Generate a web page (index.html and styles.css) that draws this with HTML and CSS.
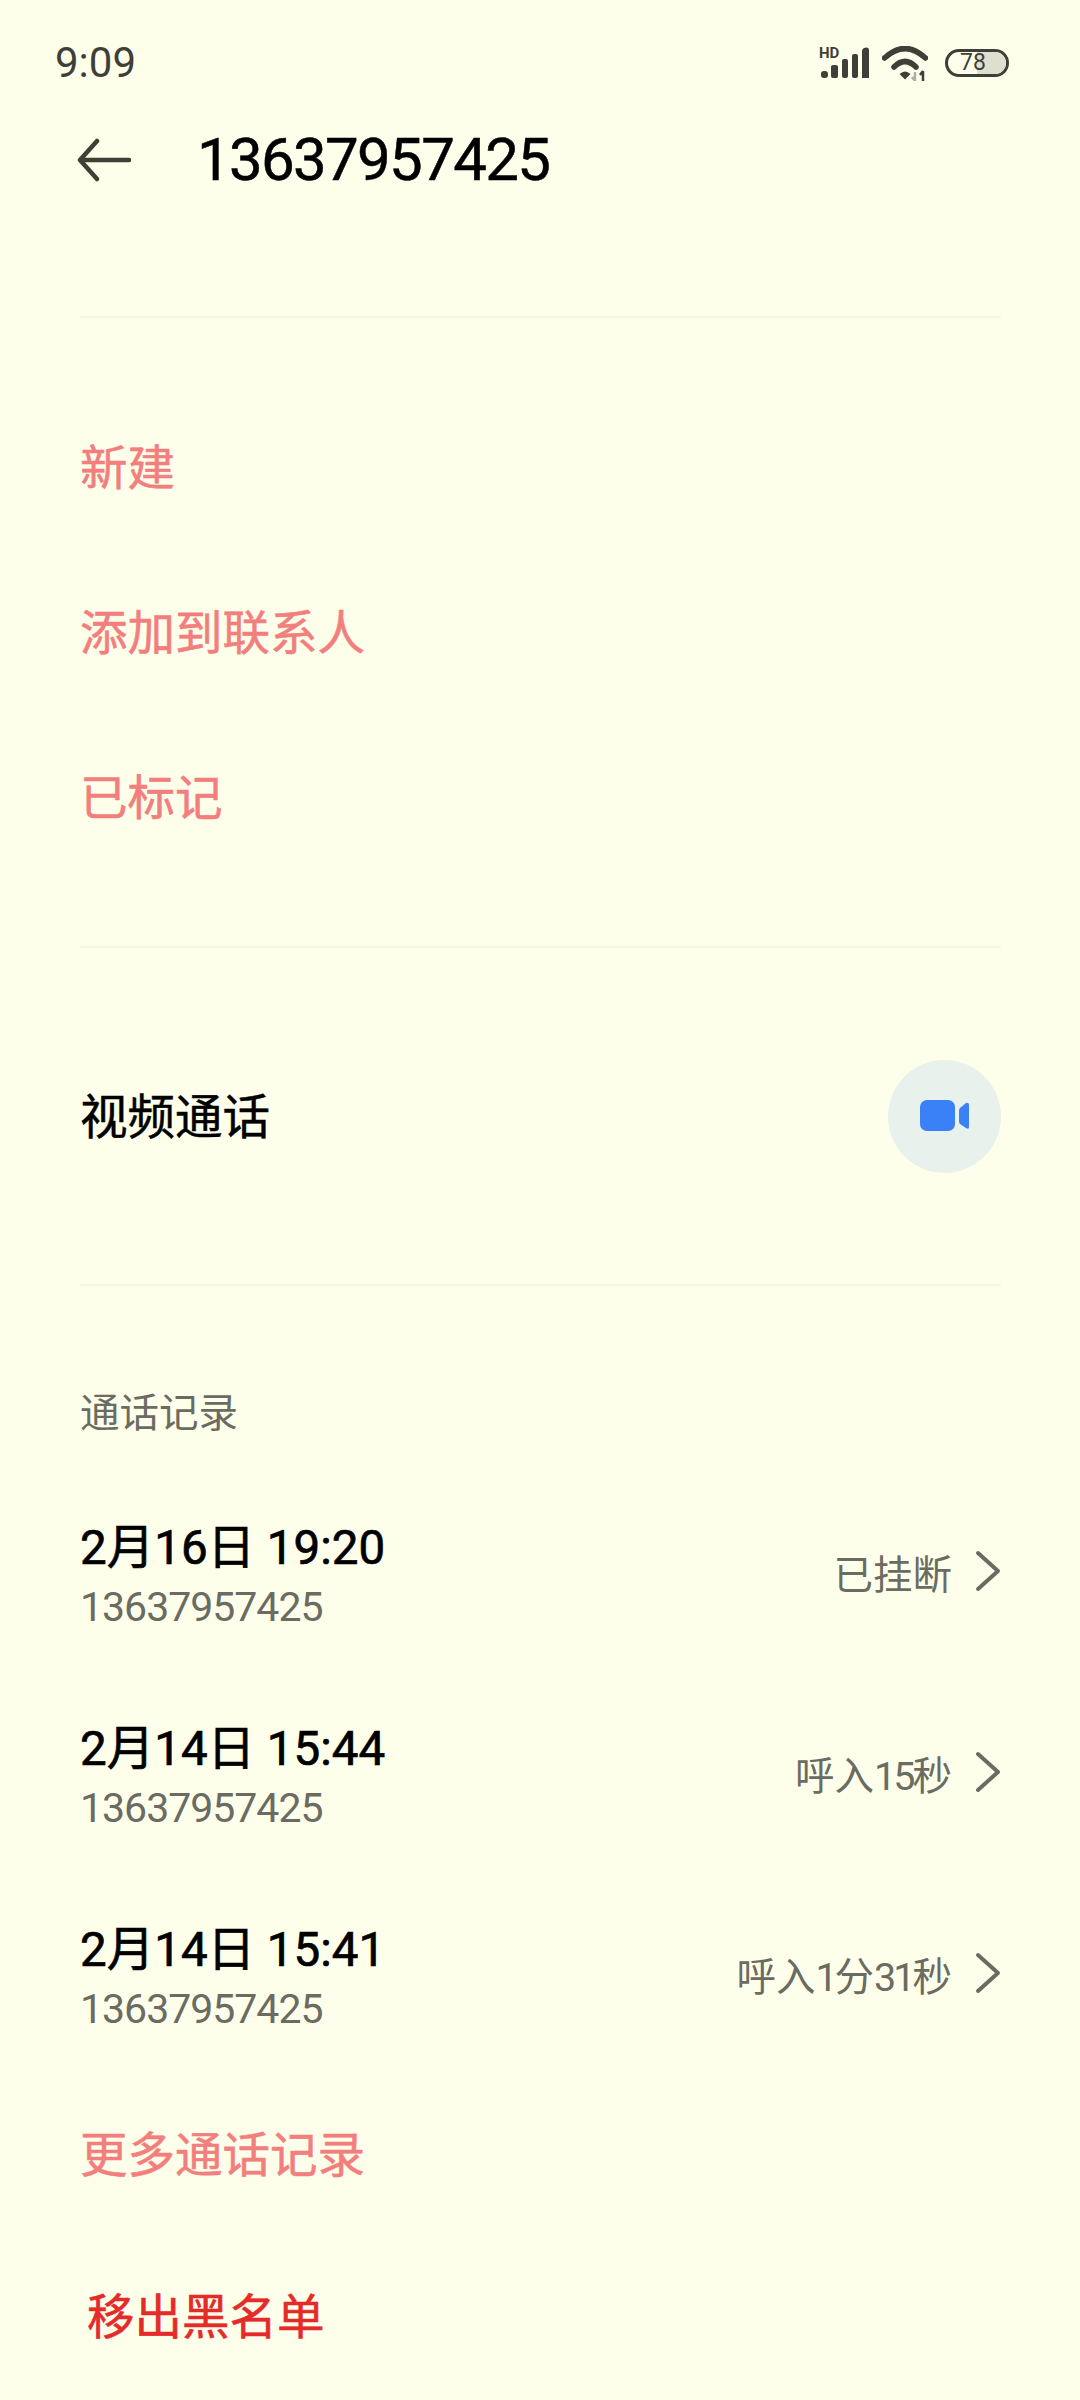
FILE: index.html
```html
<!DOCTYPE html>
<html lang="zh-CN">
<head>
<meta charset="utf-8">
<title>13637957425</title>
<link rel="stylesheet" href="styles.css">
</head>
<body>
<div class="page">
  <div class="status">
    <span class="time">9:09</span>
    <div class="status-icons">
      <svg class="ic-signal" width="50" height="40" viewBox="0 -4 50 40">
        <text x="0" y="11" class="hd">HD</text>
        <rect x="2" y="24" width="7" height="7" rx="3" fill="#3f3f38"/>
        <rect x="12" y="18" width="7" height="13" rx="2" fill="#3f3f38"/>
        <rect x="23" y="12" width="6" height="19" rx="2" fill="#3f3f38"/>
        <rect x="33" y="7" width="6" height="24" rx="2" fill="#3f3f38"/>
        <path d="M43 4 Q43 1 47 0.5 Q50 0 50 3 V31 H43 Z" fill="#3f3f38"/>
      </svg>
      <svg class="ic-wifi" width="46" height="35" viewBox="0 0 46 35">
        <path d="M2.5 12 Q23 -7 43.5 12" fill="none" stroke="#3f3f38" stroke-width="5.5" stroke-linecap="round"/>
        <path d="M12 21 Q23 10 34 21" fill="none" stroke="#3f3f38" stroke-width="5.5" stroke-linecap="round"/>
        <path d="M17.5 28 Q23 23 28.5 28 L23 33.5 Z" fill="#3f3f38"/>
        <path d="M33 35 V26 M30 31 L33 35" fill="none" stroke="#b0b0a6" stroke-width="2.5"/>
        <path d="M41 35 V25 M38 29 L41 25" fill="none" stroke="#3f3f38" stroke-width="2.5"/>
      </svg>
      <div class="battery"><span class="battery-fill"></span><span class="battery-num">78</span></div>
    </div>
  </div>

  <header class="title-bar">
    <svg class="back" width="54" height="44" viewBox="0 0 54 44">
      <path d="M52 22 H4 M20 3 L3 22 L20 41" fill="none" stroke="#3f3f38" stroke-width="4.5" stroke-linecap="round" stroke-linejoin="round"/>
    </svg>
    <h1 class="title">13637957425</h1>
  </header>

  <hr class="divider first">

  <section class="actions">
    <div class="action">新建</div>
    <div class="action">添加到联系人</div>
    <div class="action">已标记</div>
  </section>

  <hr class="divider">

  <section class="video">
    <span class="video-label">视频通话</span>
    <div class="video-btn">
      <svg width="50" height="32" viewBox="0 0 50 32">
        <rect x="0" y="0" width="35" height="31" rx="7" fill="#3a80f6"/>
        <path d="M40 8 L46 3 Q49 2 49 5 V27 Q49 30 46 28 L40 24 Q39 23 39 21 V11 Q39 9 40 8 Z" fill="#3a80f6"/>
      </svg>
    </div>
  </section>

  <hr class="divider">

  <div class="section-label">通话记录</div>

  <section class="records">
    <div class="record">
      <div class="record-main"><div class="record-date">2月16日 19:20</div><div class="record-num">13637957425</div></div>
      <div class="record-side"><span>已挂断</span><svg class="chev" width="26" height="42" viewBox="0 0 26 42"><path d="M3 3 L23 21 L3 39" fill="none" stroke="#6b6b62" stroke-width="4" stroke-linecap="round" stroke-linejoin="round"/></svg></div>
    </div>
    <div class="record">
      <div class="record-main"><div class="record-date">2月14日 15:44</div><div class="record-num">13637957425</div></div>
      <div class="record-side"><span>呼入<span class="digits">15</span>秒</span><svg class="chev" width="26" height="42" viewBox="0 0 26 42"><path d="M3 3 L23 21 L3 39" fill="none" stroke="#6b6b62" stroke-width="4" stroke-linecap="round" stroke-linejoin="round"/></svg></div>
    </div>
    <div class="record">
      <div class="record-main"><div class="record-date">2月14日 15:41</div><div class="record-num">13637957425</div></div>
      <div class="record-side"><span>呼入<span class="digits">1</span>分<span class="digits">31</span>秒</span><svg class="chev" width="26" height="42" viewBox="0 0 26 42"><path d="M3 3 L23 21 L3 39" fill="none" stroke="#6b6b62" stroke-width="4" stroke-linecap="round" stroke-linejoin="round"/></svg></div>
    </div>
  </section>

  <div class="more">更多通话记录</div>
  <div class="unblock">移出黑名单</div>
</div>
</body>
</html>
```
FILE: styles.css
```css
* { box-sizing: border-box; }
html, body { margin: 0; padding: 0; }
body {
  background: #feffeb;
  font-family: "Roboto", "Noto Sans CJK SC", sans-serif;
  color: #000;
}
.page { width: 1080px; height: 2400px; overflow: hidden; }

.status {
  height: 124px;
  padding: 41px 71px 0 55px;
  display: flex;
  justify-content: space-between;
  align-items: flex-start;
}
.time { font-size: 42px; line-height: 44px; color: #3f3f38; }
.status-icons { display: flex; align-items: center; height: 44px; }
.ic-wifi { margin-left: 13px; }
.hd { font: 700 15px "Roboto", sans-serif; fill: #3f3f38; }
.battery {
  position: relative;
  width: 64px; height: 28px;
  border: 3px solid #3f3f38;
  border-radius: 14px;
  overflow: hidden;
  margin-left: 17px;
  padding-right: 8px;
  display: flex; align-items: center; justify-content: center;
}
.battery-fill { position: absolute; right: 0; top: 0; bottom: 0; width: 50%; background: #dfdfcf; }
.battery-num { position: relative; font-size: 23px; line-height: 22px; color: #3f3f38; }

.title-bar {
  height: 72px;
  display: flex;
  align-items: center;
  padding-left: 77px;
}
.back { flex: none; }
.title {
  margin: 0 0 0 66px;
  font-size: 60px;
  font-weight: 400;
  letter-spacing: -1.7px;
  -webkit-text-stroke: 0.5px #000;
  line-height: 72px;
  color: #000;
}

.divider {
  margin: 0 79px 0 80px;
  border: 0;
  height: 2px;
  background: #f6f6e4;
}
.divider.first { margin-top: 120px; }

.actions { padding: 64px 0 69px 80px; }
.action {
  height: 165px;
  display: flex;
  align-items: center;
  font-size: 47.5px;
  -webkit-text-stroke: 0.6px #f27f7e;
  color: #f27f7e;
}

.video {
  height: 336px;
  padding: 0 79px 0 80px;
  display: flex;
  align-items: center;
  justify-content: space-between;
}
.video-label { font-size: 47.5px; line-height: 64px; margin-top: 4px; -webkit-text-stroke: 0.5px #000; color: #000; }
.video-btn {
  width: 113px; height: 113px;
  border-radius: 50%;
  background: #e9f1ec;
  display: flex; align-items: center; justify-content: center;
}

.section-label {
  margin: 100px 0 0 80px;
  font-size: 39.5px;
  line-height: 56px;
  color: #6b6b62;
}

.records { margin-top: 76px; padding: 0 79px 0 80px; }
.record {
  height: 201px;
  display: flex;
  align-items: flex-start;
  justify-content: space-between;
}
.record-date { font-size: 47.5px; line-height: 60px; font-weight: 400; -webkit-text-stroke: 0.7px #000; color: #000; }
.record-num { font-size: 41px; line-height: 58px; letter-spacing: -1px; color: #6b6b62; }
.record-side {
  display: flex;
  align-items: center;
  gap: 23px;
  height: 106px;
  font-size: 39.5px;
  color: #6b6b62;
}
.digits { letter-spacing: -3px; }

.more {
  margin: 3px 0 0 80px;
  font-size: 47.5px;
  line-height: 64px;
  -webkit-text-stroke: 0.6px #f27f7e;
  color: #f27f7e;
}
.unblock {
  margin: 98px 0 0 87px;
  font-size: 47.5px;
  line-height: 64px;
  -webkit-text-stroke: 0.6px #e52a2a;
  color: #e52a2a;
}
```
